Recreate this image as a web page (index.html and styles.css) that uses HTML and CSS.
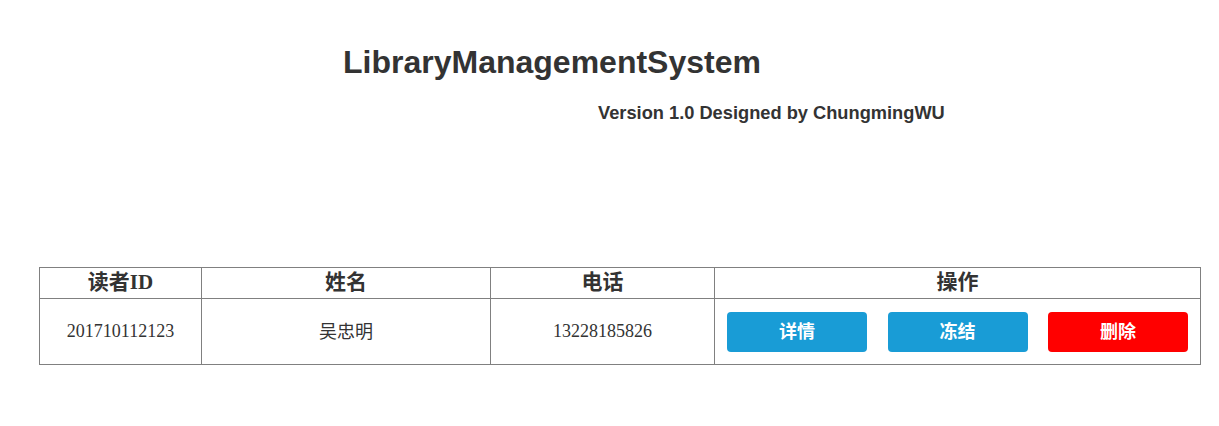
FILE: index.html
```html
<!DOCTYPE html>
<html lang="zh">
<head>
<meta charset="utf-8">
<title>LibraryManagementSystem</title>
<link rel="stylesheet" href="styles.css">
</head>
<body>
<header class="head">
  <h1 class="title">LibraryManagementSystem</h1>
  <p class="subtitle">Version 1.0 Designed by ChungmingWU</p>
</header>
<table class="readers">
  <colgroup>
    <col class="c1"><col class="c2"><col class="c3"><col class="c4">
  </colgroup>
  <thead>
    <tr><th>读者ID</th><th>姓名</th><th>电话</th><th>操作</th></tr>
  </thead>
  <tbody>
    <tr>
      <td>201710112123</td>
      <td class="name">吴忠明</td>
      <td>13228185826</td>
      <td class="ops">
        <div class="btns">
          <button class="btn blue">详情</button>
          <button class="btn blue">冻结</button>
          <button class="btn red">删除</button>
        </div>
      </td>
    </tr>
  </tbody>
</table>
</body>
</html>
```

FILE: styles.css
```css
html, body { margin: 0; padding: 0; background: #fff; }
body { color: #333; font-family: "Liberation Serif", "Noto Sans CJK SC", serif; }
.head { padding-top: 43px; height: 224px; box-sizing: border-box; }
.title {
  margin: 0 0 0 343px;
  font-family: "Liberation Sans", Arial, sans-serif;
  font-weight: bold;
  font-size: 32px;
  line-height: 38px;
  color: #333;
}
.subtitle {
  margin: 21px 0 0 598px;
  font-family: "Liberation Sans", Arial, sans-serif;
  font-weight: bold;
  font-size: 18.25px;
  line-height: 22px;
  color: #333;
}
.readers {
  margin: 43px 0 0 39px;
  width: 1162px;
  border-collapse: collapse;
  border: 1px solid #808080;
}
.c1 { width: 162px; }
.c2 { width: 289px; }
.c3 { width: 224px; }
.c4 { width: 486px; }
.readers th, .readers td {
  border: 1px solid #808080;
  text-align: center;
  padding: 0;
}
.readers th {
  height: 27px;
  padding-bottom: 3px;
  font-size: 21px;
  line-height: 26px;
  font-weight: bold;
  font-family: "Liberation Serif", "Noto Sans CJK SC", serif;
}
.readers td {
  height: 65px;
  font-size: 18px;
}
.readers td.name {
  height: 62px;
  font-family: "Noto Sans CJK SC", sans-serif;
  font-size: 18px;
  padding-bottom: 3px;
}
.btns {
  display: flex;
  justify-content: space-between;
  padding: 0 12px 0 12px;
}
.btn {
  width: 140px;
  height: 40px;
  border: 0;
  border-radius: 4px;
  color: #fff;
  font-size: 18px;
  font-weight: bold;
  font-family: "Noto Sans CJK SC", sans-serif;
  padding: 0 0 3px 0;
}
.blue { background: #199cd6; }
.red { background: #ff0000; }
```
